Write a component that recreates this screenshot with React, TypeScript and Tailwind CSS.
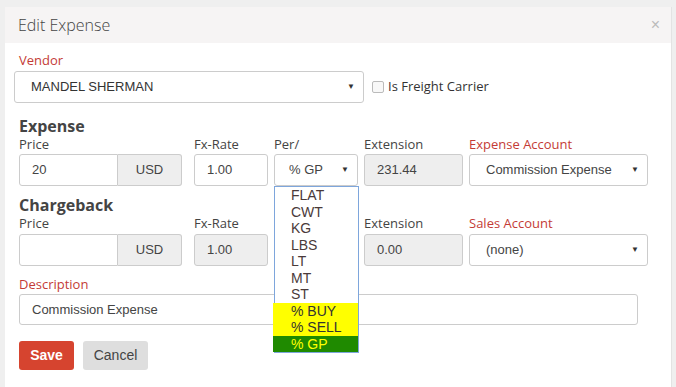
import React from 'react';

const sans = "font-['Open_Sans',sans-serif]";
const arial = "font-['Liberation_Sans',Arial,sans-serif]";

function Arrow() {
  return <span className="text-[8px] text-[#333] leading-none">▼</span>;
}

function Label({ children, red, w, className = '' }: { children: React.ReactNode; red?: boolean; w: string; className?: string }) {
  return (
    <div className={`${w} ${className} h-4 leading-4 text-[13px] ${sans} ${red ? 'text-[#c43b36]' : 'text-[#444]'}`}>
      {children}
    </div>
  );
}

const options = ['FLAT', 'CWT', 'KG', 'LBS', 'LT', 'MT', 'ST'];

export default function App() {
  return (
    <div className="w-[676px] h-[387px] overflow-hidden bg-[#efefef] pt-[7px] pl-[5px]">
      <div className="w-[667px] h-[400px] bg-white border-r border-[#e3e3e3]">
        {/* header */}
        <div className="h-9 bg-[#f6f4f4] flex items-center justify-between pl-[13px] pr-[11px]">
          <span className={`${sans} text-[16px] text-[#444] font-light`}>Edit Expense</span>
          <span className={`${arial} text-[16px] text-[#bbb]`}>×</span>
        </div>

        <div className="pl-[14px] relative">
          {/* vendor */}
          <div className={`pt-2 h-[26px] leading-[18px] text-[13px] ${sans} text-[#c43b36]`}>Vendor</div>
          <div className="mt-[2px] flex items-center -ml-[5px]">
            <div className={`w-[350px] h-8 border border-[#ccc] rounded-[3px] flex items-center justify-between pl-4 pr-2 ${arial} text-[13px] text-[#333]`}>
              <span>MANDEL SHERMAN</span>
              <Arrow />
            </div>
            <div className="ml-2 w-3 h-3 border border-[#bbb] rounded-[2px] bg-[#f8f8f8]" />
            <span className={`ml-[4px] text-[13px] ${sans} text-[#333]`}>Is Freight Carrier</span>
          </div>

          {/* expense */}
          <div className={`mt-[14px] h-[18px] leading-[18px] text-[16px] font-bold ${sans} text-[#444]`}>Expense</div>
          <div className="flex mt-px">
            <Label w="w-[175px]">Price</Label>
            <Label w="w-[80px]">Fx-Rate</Label>
            <Label w="w-[90px]">Per/</Label>
            <Label w="w-[105px]">Extension</Label>
            <Label w="w-[180px]" red>Expense Account</Label>
          </div>
          <div className={`mt-[2px] flex h-8 ${arial} text-[13px] text-[#444]`}>
            <div className="w-[99px] border border-[#ccc] rounded-l-[3px] flex items-center pl-3">20</div>
            <div className="w-[64px] border border-l-0 border-[#ccc] rounded-r-[3px] bg-[#eee] flex items-center justify-center">USD</div>
            <div className="ml-3 w-[74px] border border-[#ccc] rounded-[3px] flex items-center pl-3">1.00</div>
            <div className="ml-[6px] w-[84px] border border-[#ccc] rounded-[3px] flex items-center justify-between pl-[14px] pr-2">
              <span>% GP</span>
              <Arrow />
            </div>
            <div className="ml-[6px] w-[99px] border border-[#ccc] rounded-[3px] bg-[#eee] flex items-center pl-3">231.44</div>
            <div className="ml-[6px] w-[179px] border border-[#ccc] rounded-[3px] flex items-center justify-between pl-4 pr-2">
              <span>Commission Expense</span>
              <Arrow />
            </div>
          </div>

          {/* chargeback */}
          <div className={`mt-[10px] h-[18px] leading-[18px] text-[16px] font-bold ${sans} text-[#444]`}>Chargeback</div>
          <div className="flex mt-px">
            <Label w="w-[175px]">Price</Label>
            <Label w="w-[170px]">Fx-Rate</Label>
            <Label w="w-[105px]">Extension</Label>
            <Label w="w-[180px]" red>Sales Account</Label>
          </div>
          <div className={`mt-[3px] flex h-8 ${arial} text-[13px] text-[#444]`}>
            <div className="w-[99px] border border-[#ccc] rounded-l-[3px]" />
            <div className="w-[64px] border border-l-0 border-[#ccc] rounded-r-[3px] bg-[#eee] flex items-center justify-center">USD</div>
            <div className="ml-3 w-[74px] border border-[#ccc] rounded-[3px] bg-[#eee] flex items-center pl-3">1.00</div>
            <div className="ml-[6px] w-[84px]" />
            <div className="ml-[6px] w-[99px] border border-[#ccc] rounded-[3px] bg-[#eee] flex items-center pl-3">0.00</div>
            <div className="ml-[6px] w-[179px] border border-[#ccc] rounded-[3px] flex items-center justify-between pl-4 pr-2">
              <span>(none)</span>
              <Arrow />
            </div>
          </div>

          {/* description */}
          <div className="mt-[10px]">
            <Label w="w-[200px]" red>Description</Label>
          </div>
          <div className={`mt-[2px] w-[619px] h-[31px] border border-[#ccc] rounded-[3px] flex items-center pl-3 ${arial} text-[13px] text-[#444]`}>
            Commission Expense
          </div>

          <div className={`mt-4 flex gap-[9px] ${arial} text-[14px]`}>
            <button className="w-[55px] h-[29px] rounded-[3px] bg-[#d6442f] text-white font-bold">Save</button>
            <button className="w-[65px] h-[29px] rounded-[3px] bg-[#dedede] text-[#444]">Cancel</button>
          </div>

          {/* open Per/ dropdown list */}
          <div className={`absolute left-[269px] top-[143px] w-[85px] border border-[#7ea6dc] bg-white ${arial} text-[14px]`}>
            {options.map((o) => (
              <div key={o} className="h-[16.5px] leading-[16.5px] pl-4 text-[#4a3a3a]">{o}</div>
            ))}
            <div className="-ml-[2px] h-[16.5px] leading-[16.5px] pl-[18px] bg-[#ffff00] text-[#333]">% BUY</div>
            <div className="-ml-[2px] h-[16.5px] leading-[16.5px] pl-[18px] bg-[#ffff00] text-[#333]">% SELL</div>
            <div className="-ml-[2px] h-[16.5px] leading-[16.5px] pl-[18px] bg-[#1f8a00] text-[#ffff00]">% GP</div>
          </div>
        </div>
      </div>
    </div>
  );
}
